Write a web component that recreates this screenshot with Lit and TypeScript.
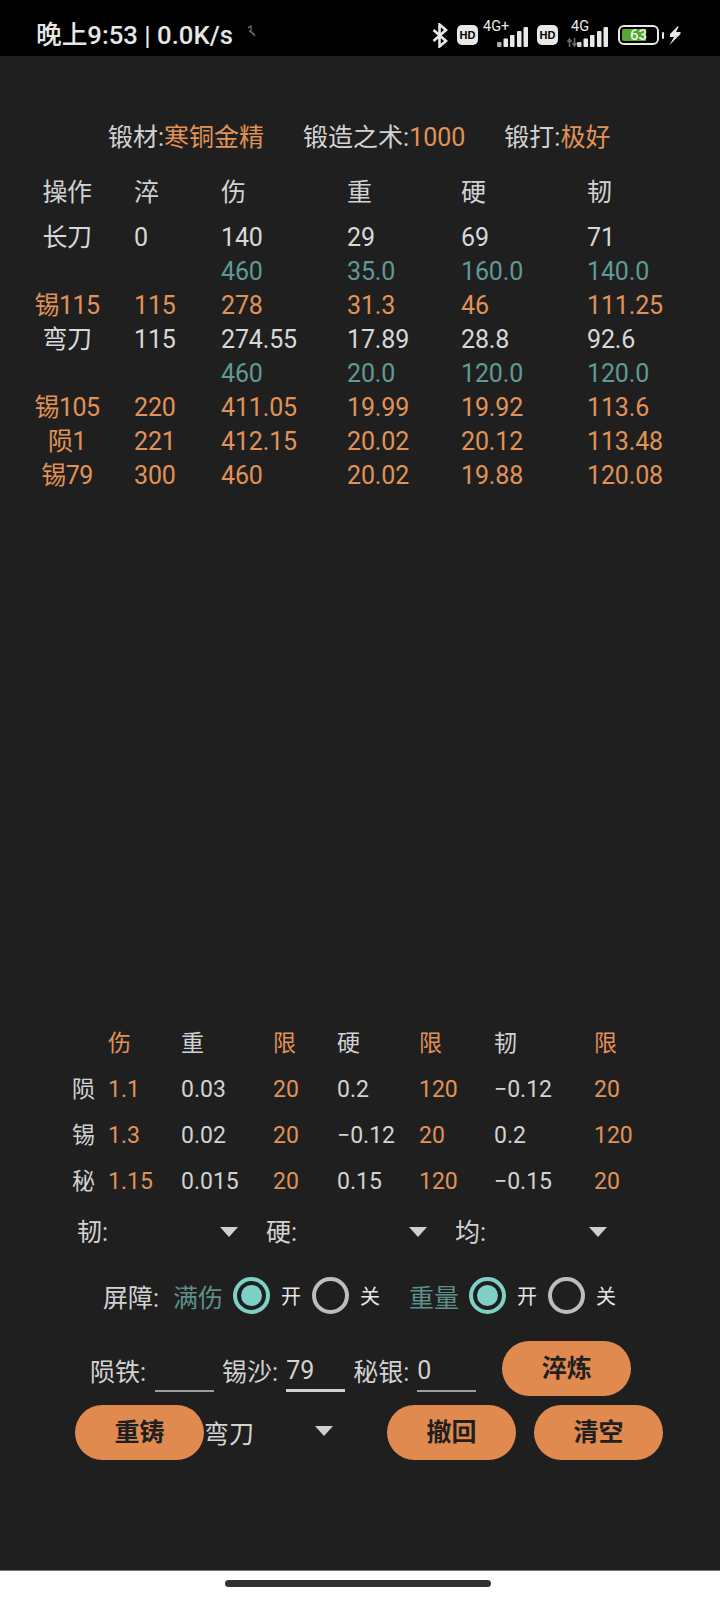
import { LitElement, html, css, svg } from "lit";
import { customElement } from "lit/decorators.js";

type Row = { c: string; v: string[] };

const TOP: Row[] = [
  { c: "w", v: ["长刀", "0", "140", "29", "69", "71"] },
  { c: "t", v: ["", "", "460", "35.0", "160.0", "140.0"] },
  { c: "o", v: ["锡115", "115", "278", "31.3", "46", "111.25"] },
  { c: "w", v: ["弯刀", "115", "274.55", "17.89", "28.8", "92.6"] },
  { c: "t", v: ["", "", "460", "20.0", "120.0", "120.0"] },
  { c: "o", v: ["锡105", "220", "411.05", "19.99", "19.92", "113.6"] },
  { c: "o", v: ["陨1", "221", "412.15", "20.02", "20.12", "113.48"] },
  { c: "o", v: ["锡79", "300", "460", "20.02", "19.88", "120.08"] },
];

const MAT: string[][] = [
  ["", "伤", "重", "限", "硬", "限", "韧", "限"],
  ["陨", "1.1", "0.03", "20", "0.2", "120", "−0.12", "20"],
  ["锡", "1.3", "0.02", "20", "−0.12", "20", "0.2", "120"],
  ["秘", "1.15", "0.015", "20", "0.15", "120", "−0.15", "20"],
];

const bars = (first = 0.5) => svg`
  <svg width="31" height="20" viewBox="0 0 31 20">
    <rect x="0" y="15" width="4.5" height="5" rx="1" fill="#e8e8e8" opacity=${first}/>
    <rect x="6.5" y="11.5" width="4.5" height="8.5" rx="1" fill="#e8e8e8"/>
    <rect x="13" y="8" width="4.5" height="12" rx="1" fill="#e8e8e8"/>
    <rect x="20" y="4" width="4.5" height="16" rx="1" fill="#e8e8e8"/>
    <rect x="26.5" y="0" width="4.5" height="20" rx="1" fill="#e8e8e8"/>
  </svg>`;

@customElement("app-root")
export class AppRoot extends LitElement {
  static styles = css`
    :host {
      display: block;
      width: 720px;
      height: 1600px;
      font-family: Roboto, "Noto Sans CJK SC", sans-serif;
      font-size: 25px;
      color: #d2d2d2;
      background: #1f1f1f;
      overflow: hidden;
    }
    .page { display: flex; flex-direction: column; height: 1600px; }

    .status {
      height: 56px; flex: none; background: #000; color: #e6e6e6;
      display: flex; align-items: center; padding: 0 39px 0 36px; box-sizing: border-box;
    }
    .clock { font-size: 25.7px; font-weight: 500; line-height: 28px; margin-top: 14px; }
    .mute { margin: 6px 0 0 14px; }
    .icons { margin-left: auto; display: flex; align-items: center; padding-top: 14px; }
    .hd {
      width: 21px; height: 20px; border-radius: 5px; background: #e8e8e8; color: #000;
      font: 700 11px/20px "Liberation Sans", sans-serif; text-align: center; flex: none;
    }
    .net { display: flex; position: relative; width: 45px; height: 24px; align-items: flex-end; justify-content: flex-end; flex: none; }
    .net span { position: absolute; left: 0; top: -4px; font: 400 14.5px/15px Roboto, sans-serif; color: #e8e8e8; }
    .net .arrows { position: absolute; left: 4px; bottom: 0; }
    .batt {
      width: 41px; height: 20px; box-sizing: border-box; border: 2px solid #e8e8e8; border-radius: 6px;
      padding: 2px; position: relative; display: flex; flex: none;
    }
    .fill { width: 24px; background: #55a82c; border-radius: 2px 0 0 2px; }
    .batt span { position: absolute; left: 0; right: 0; top: 0; text-align: center; font: 500 15px/16px Roboto, sans-serif; color: #e8f4e0; }
    .nub { width: 2px; height: 7px; background: #e8e8e8; margin: 0 5px 0 3px; flex: none; border-radius: 1px; }

    .main { flex: 1; display: flex; flex-direction: column; min-height: 0; }
    .summary { display: flex; gap: 39px; padding: 65px 0 0 108px; line-height: 34px; }
    .o { color: #e09257; }
    .t { color: #5f9a95; }
    .w { color: #d8d8d8; }

    .table { margin-top: 21px; letter-spacing: -0.15px; }
    .row { display: grid; grid-template-columns: 134px 87px 126px 114px 126px 1fr; height: 34px; line-height: 34px; white-space: nowrap; }
    .row > :first-child { text-align: center; letter-spacing: -0.6px; }
    .row.head { margin-bottom: 11px; }

    .lower { margin-top: auto; padding-bottom: 110px; }
    .mat {
      display: grid; grid-template-columns: 36px 73px 92px 64px 82px 75px 100px 1fr;
      grid-auto-rows: 46px; line-height: 46px; padding-left: 72px; font-size: 23px; white-space: nowrap;
    }
    .selects { display: flex; padding: 5px 0 0 77px; height: 46px; line-height: 46px; }
    .select { display: flex; justify-content: space-between; align-items: center; }
    .s1, .s2 { width: 161px; margin-right: 28px; }
    .s3 { width: 152px; }
    .caret { width: 0; height: 0; border-left: 9px solid transparent; border-right: 9px solid transparent; border-top: 10px solid #d0d0d0; margin-top: -3px; }

    .radios { display: flex; align-items: center; gap: 11px; height: 37px; margin-top: 21px; padding-left: 103px; white-space: pre; }
    .lead { width: 59px; }
    .teal2 { color: #5e8f8a; }
    .tiny { font-size: 20px; color: #e6e6e6; width: 20px; }
    .gapl { margin-left: 18px; }
    .gapl + .radio { margin-left: 0; }
    .radio { width: 37px; height: 37px; box-sizing: border-box; border: 4px solid #bdbdbd; border-radius: 50%; flex: none; display: flex; align-items: center; justify-content: center; }
    .radio.on { border-color: #7fd0c6; margin-left: -1px; }
    .radio.on::after { content: ""; width: 21px; height: 21px; border-radius: 50%; background: #7fd0c6; }

    .inputs { display: flex; align-items: center; height: 55px; margin-top: 27px; padding-left: 90px; white-space: pre; }
    .inp { width: 59px; height: 40px; box-sizing: border-box; border-bottom: 2px solid #9d9d9d; line-height: 38px; margin: 6px 8px 0 0; flex: none; }
    .inp.focus { border-bottom: 3px solid #d0d0d0; }
    .lab { flex: none; margin-right: 8px; padding-top: 2px; }
    .lab:first-child { margin-right: 9px; }
    .btn {
      width: 129px; height: 55px; border-radius: 28px; background: #e08a50; color: #1f1f1f;
      font-weight: 700; line-height: 55px; text-align: center; flex: none;
    }
    .inputs .btn { margin-left: 18px; }
    .actions { display: flex; align-items: center; height: 55px; margin-top: 9px; padding-left: 75px; white-space: pre; }
    .pick { width: 131px; margin: 0 52px 0 0; display: flex; justify-content: space-between; align-items: center; box-sizing: border-box; padding-right: 2px; flex: none; }
    .pick span { margin-top: -1px; }
    .actions .btn + .btn { margin-left: 18px; }

    .nav { height: 30px; flex: none; background: #fff; border-top: 1px solid #777; box-sizing: border-box; display: flex; justify-content: center; padding-top: 9px; }
    .pill { width: 266px; height: 7px; border-radius: 4px; background: #333; margin-left: -5px; }
  `;

  private statusBar() {
    return html`<div class="status">
      <div class="clock">晚上9:53 | 0.0K/s</div>
      <svg class="mute" width="9" height="12" viewBox="0 0 9 12">
        <path d="M1 3 L4 1 L4 7 L8 11 M2 6 L7 9" fill="none" stroke="#777" stroke-width="1.2"/>
      </svg>
      <div class="icons">
        <svg width="16" height="25" viewBox="0 0 16 25" style="margin-right:9px">
          <path d="M1.5 7 L14 18 L7.5 23.5 L7.5 1.5 L14 7 L1.5 18" fill="none" stroke="#e8e8e8" stroke-width="2.6"/>
        </svg>
        <div class="hd">HD</div>
        <div class="net" style="margin:0 9px 0 5px">
          <span>4G+</span>${bars(0.75)}
        </div>
        <div class="hd">HD</div>
        <div class="net" style="margin:0 10px 0 5px">
          <span style="left:8px">4G</span>
          <svg class="arrows" width="10" height="9" viewBox="0 0 10 9">
            <path d="M2.5 9 V3 M0.5 4 L2.5 1 L4.5 4 M7.5 0 V6 M5.5 5 L7.5 8 L9.5 5" fill="none" stroke="#666" stroke-width="1.6"/>
          </svg>
          ${bars(0.9)}
        </div>
        <div class="batt"><div class="fill"></div><span>63</span></div>
        <div class="nub"></div>
        <svg width="12" height="19" viewBox="0 0 12 19">
          <path d="M9 0 L1 8 L1 11 L5 11 L0.5 19 L11.5 8 L11.5 6 L7 6 L9.5 1 Z" fill="#e8e8e8"/>
        </svg>
      </div>
    </div>`;
  }

  private row(r: Row) {
    return html`<div class="row ${r.c}">${r.v.map((x) => html`<div>${x}</div>`)}</div>`;
  }

  render() {
    return html`<div class="page">
      ${this.statusBar()}
      <div class="main">
        <div class="summary">
          <div>锻材:<span class="o">寒铜金精</span></div>
          <div>锻造之术:<span class="o">1000</span></div>
          <div>锻打:<span class="o">极好</span></div>
        </div>
        <div class="table">
          <div class="row head">${["操作", "淬", "伤", "重", "硬", "韧"].map((x) => html`<div>${x}</div>`)}</div>
          ${TOP.map((r) => this.row(r))}
        </div>
        <div class="lower">
          <div class="mat">
            ${MAT.map((r) => r.map((x, i) => html`<div class=${i > 0 && i % 2 === 1 ? "o" : ""}>${x}</div>`))}
          </div>
          <div class="selects">
            <div class="select s1"><span>韧:</span><i class="caret"></i></div>
            <div class="select s2"><span>硬:</span><i class="caret"></i></div>
            <div class="select s3"><span>均:</span><i class="caret"></i></div>
          </div>
          <div class="radios">
            <span class="lead">屏障:</span>
            <span class="teal2">满伤</span>
            <div class="radio on"></div><span class="tiny">开</span>
            <div class="radio"></div><span class="tiny">关</span>
            <span class="teal2 gapl">重量</span>
            <div class="radio on"></div><span class="tiny">开</span>
            <div class="radio"></div><span class="tiny">关</span>
          </div>
          <div class="inputs">
            <span class="lab">陨铁:</span><div class="inp"></div>
            <span class="lab">锡沙:</span><div class="inp focus">79</div>
            <span class="lab">秘银:</span><div class="inp">0</div>
            <div class="btn">淬炼</div>
          </div>
          <div class="actions">
            <div class="btn">重铸</div>
            <div class="pick"><span>弯刀</span><i class="caret"></i></div>
            <div class="btn">撤回</div>
            <div class="btn">清空</div>
          </div>
        </div>
      </div>
      <div class="nav"><div class="pill"></div></div>
    </div>`;
  }
}
